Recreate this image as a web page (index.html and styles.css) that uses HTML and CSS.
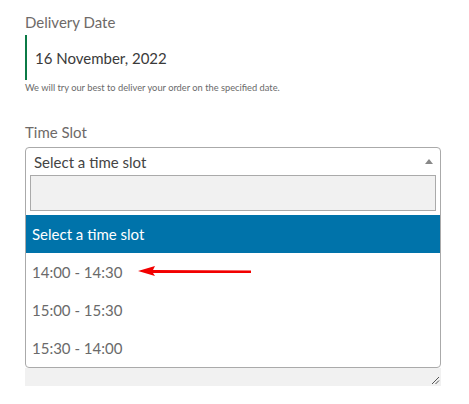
FILE: index.html
```html
<!DOCTYPE html>
<html>
<head>
<meta charset="utf-8">
<link rel="stylesheet" href="styles.css">
</head>
<body>
<div class="form">
  <div class="label">Delivery Date</div>
  <div class="date-block"><span class="date">16 November, 2022</span></div>
  <div class="note">We will try our best to deliver your order on the specified date.</div>
  <div class="label label-slot">Time Slot</div>
  <div class="select">
    <div class="selection">
      <span class="selected">Select a time slot</span>
      <span class="caret"></span>
    </div>
    <div class="search-wrap"><div class="search"></div></div>
    <ul class="options">
      <li class="option active">Select a time slot</li>
      <li class="option">14:00 - 14:30
        <svg class="pointer" width="120" height="14" viewBox="0 0 120 14">
          <path d="M2 7 L19 2 L17 6 L115 6.5 L115 9 L17 9 L19 12 Z" fill="#f20000"/>
        </svg>
      </li>
      <li class="option">15:00 - 15:30</li>
      <li class="option">15:30 - 14:00</li>
    </ul>
  </div>
  <div class="textarea-rest">
    <svg class="grip" width="9" height="9" viewBox="0 0 9 9">
      <path d="M1 8 L8 1 M4.5 8 L8 4.5" stroke="#555" stroke-width="1"/>
    </svg>
  </div>
</div>
</body>
</html>
```
FILE: styles.css
```css
* { box-sizing: border-box; }
html, body { margin: 0; padding: 0; background: #fff; }
body { font-family: Lato, "Open Sans", sans-serif; }
.form {
  padding: 10px 0 0 25px;
  width: 441px;
}
.label {
  font-size: 15px;
  line-height: 24px;
  color: #6e6a68;
}
.date-block {
  margin-top: 1px;
  border-left: 2px solid #0b7a46;
  height: 45px;
  display: flex;
  align-items: center;
  padding-left: 8px;
}
.date {
  font-size: 15px;
  color: #3a3a3a;
}
.note {
  font-size: 9.3px;
  line-height: 16px;
  color: #6a6a6a;
}
.label-slot {
  margin-top: 24px;
}
.select {
  margin-top: 3px;
  border: 1px solid #aaa;
  border-radius: 4px;
  width: 416px;
}
.selection {
  height: 27px;
  display: flex;
  align-items: center;
  justify-content: space-between;
  padding: 0 8px 0 8px;
}
.selected {
  font-size: 15px;
  color: #444;
}
.caret {
  width: 0; height: 0;
  border-left: 4px solid transparent;
  border-right: 4px solid transparent;
  border-bottom: 5px solid #888;
  margin-right: -1px;
}
.search-wrap {
  padding: 0 4px 4px 4px;
}
.search {
  height: 36px;
  border: 1px solid #aaa;
  background: #f1f1f1;
}
.options {
  list-style: none;
  margin: 0;
  padding: 0;
}
.option {
  position: relative;
  height: 38px;
  display: flex;
  align-items: center;
  padding-left: 6px;
  font-size: 15px;
  color: #6a6a6a;
}
.option.active {
  background: #0073aa;
  color: #fff;
}
.pointer {
  position: absolute;
  left: 110px;
  top: 11px;
}
.textarea-rest {
  position: relative;
  width: 416px;
  height: 18px;
  background: #f1f1f1;
}
.grip {
  position: absolute;
  right: 1px;
  bottom: 1px;
}
```
